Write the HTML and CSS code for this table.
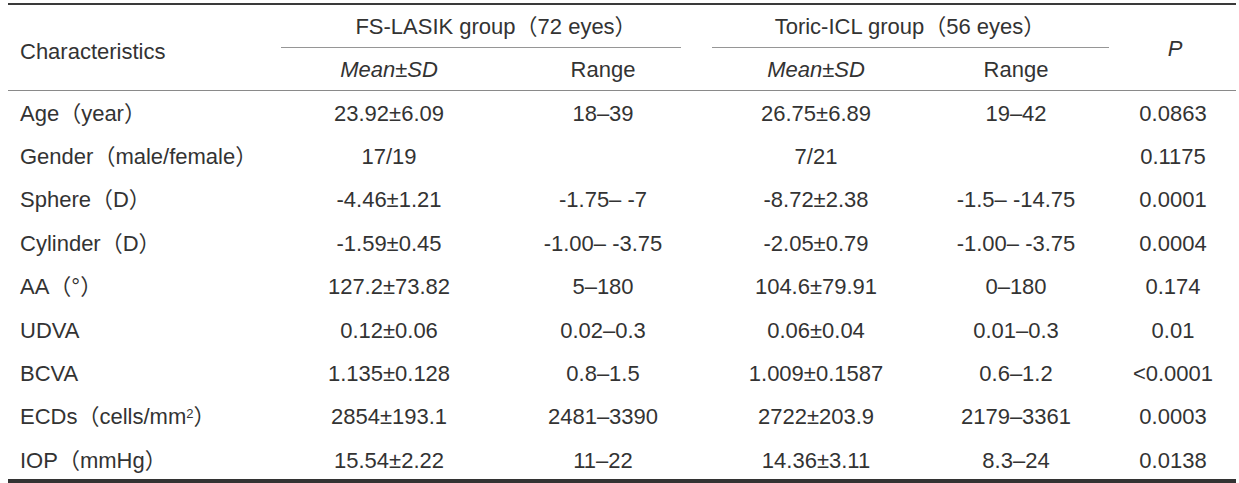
FILE: index.html
```html
<!DOCTYPE html>
<html lang="en">
<head>
<meta charset="utf-8">
<title>Characteristics table</title>
<link rel="stylesheet" href="styles.css">
</head>
<body>
<div class="table">
  <div class="h-char">Characteristics</div>
  <div class="h-group h-fs"><span class="h-title">FS-LASIK group（72 eyes）</span><span class="rule"></span></div>
  <div class="h-group h-toric"><span class="h-title">Toric-ICL group（56 eyes）</span><span class="rule"></span></div>
  <div class="h-p"><i>P</i></div>
  <div class="h-sub"><i>Mean±SD</i></div>
  <div class="h-sub">Range</div>
  <div class="h-sub"><i>Mean±SD</i></div>
  <div class="h-sub">Range</div>

  <div class="c name">Age（year）</div><div class="c">23.92±6.09</div><div class="c">18–39</div><div class="c">26.75±6.89</div><div class="c">19–42</div><div class="c">0.0863</div>
  <div class="c name">Gender（male/female）</div><div class="c">17/19</div><div class="c"></div><div class="c">7/21</div><div class="c"></div><div class="c">0.1175</div>
  <div class="c name">Sphere（D）</div><div class="c">-4.46±1.21</div><div class="c">-1.75– -7</div><div class="c">-8.72±2.38</div><div class="c">-1.5– -14.75</div><div class="c">0.0001</div>
  <div class="c name">Cylinder（D）</div><div class="c">-1.59±0.45</div><div class="c">-1.00– -3.75</div><div class="c">-2.05±0.79</div><div class="c">-1.00– -3.75</div><div class="c">0.0004</div>
  <div class="c name">AA（°）</div><div class="c">127.2±73.82</div><div class="c">5–180</div><div class="c">104.6±79.91</div><div class="c">0–180</div><div class="c">0.174</div>
  <div class="c name">UDVA</div><div class="c">0.12±0.06</div><div class="c">0.02–0.3</div><div class="c">0.06±0.04</div><div class="c">0.01–0.3</div><div class="c">0.01</div>
  <div class="c name">BCVA</div><div class="c">1.135±0.128</div><div class="c">0.8–1.5</div><div class="c">1.009±0.1587</div><div class="c">0.6–1.2</div><div class="c">&lt;0.0001</div>
  <div class="c name">ECDs（cells/mm<sup>2</sup>）</div><div class="c">2854±193.1</div><div class="c">2481–3390</div><div class="c">2722±203.9</div><div class="c">2179–3361</div><div class="c">0.0003</div>
  <div class="c name">IOP（mmHg）</div><div class="c">15.54±2.22</div><div class="c">11–22</div><div class="c">14.36±3.11</div><div class="c">8.3–24</div><div class="c">0.0138</div>
</div>
</body>
</html>
```

FILE: styles.css
```css
html, body {
  background: #ffffff;
}
body {
  margin: 3px 3px 0 8px;
  font-family: "Liberation Sans", Arial, "Noto Sans CJK SC", sans-serif;
  font-size: 22px;
  line-height: 25px;
  color: #333333;
}
.table {
  width: 1228px;
  display: grid;
  grid-template-columns: 274px 214px 214px 212px 188px 126px;
  grid-template-rows: 43px 43px repeat(8, 43.4px) 40.8px;
  border-top: 2px solid #3a3a3a;
  border-bottom: 4px solid #333333;
}
.h-char {
  grid-column: 1;
  grid-row: 1 / 3;
  display: flex;
  align-items: center;
  padding: 7px 0 0 12px;
  border-bottom: 1px solid #8a8a8a;
}
.h-p {
  grid-column: 6;
  grid-row: 1 / 3;
  display: flex;
  align-items: center;
  justify-content: center;
  padding: 2px 0 0 4px;
  border-bottom: 1px solid #8a8a8a;
}
.h-group {
  grid-row: 1;
  display: flex;
  flex-direction: column;
}
.h-fs { grid-column: 2 / 4; }
.h-toric { grid-column: 4 / 6; }
.h-title {
  flex: 1;
  display: flex;
  align-items: center;
  justify-content: center;
}
.rule {
  height: 1px;
  background: #969696;
}
.h-fs .rule { margin: 0 29px 0 -1px; }
.h-toric .rule { margin: 0 1px 0 2px; }
.h-sub {
  grid-row: 2;
  display: flex;
  align-items: center;
  justify-content: center;
  border-bottom: 1px solid #8a8a8a;
}
.c {
  display: flex;
  align-items: center;
  justify-content: center;
  white-space: pre;
  padding-top: 1px;
}
.c:nth-last-child(-n+6) {
  padding-top: 3px;
}
.c.name {
  justify-content: flex-start;
  padding-left: 12px;
}
sup {
  font-size: 13px;
  line-height: 0;
  position: relative;
  top: -3px;
  vertical-align: super;
}
```
